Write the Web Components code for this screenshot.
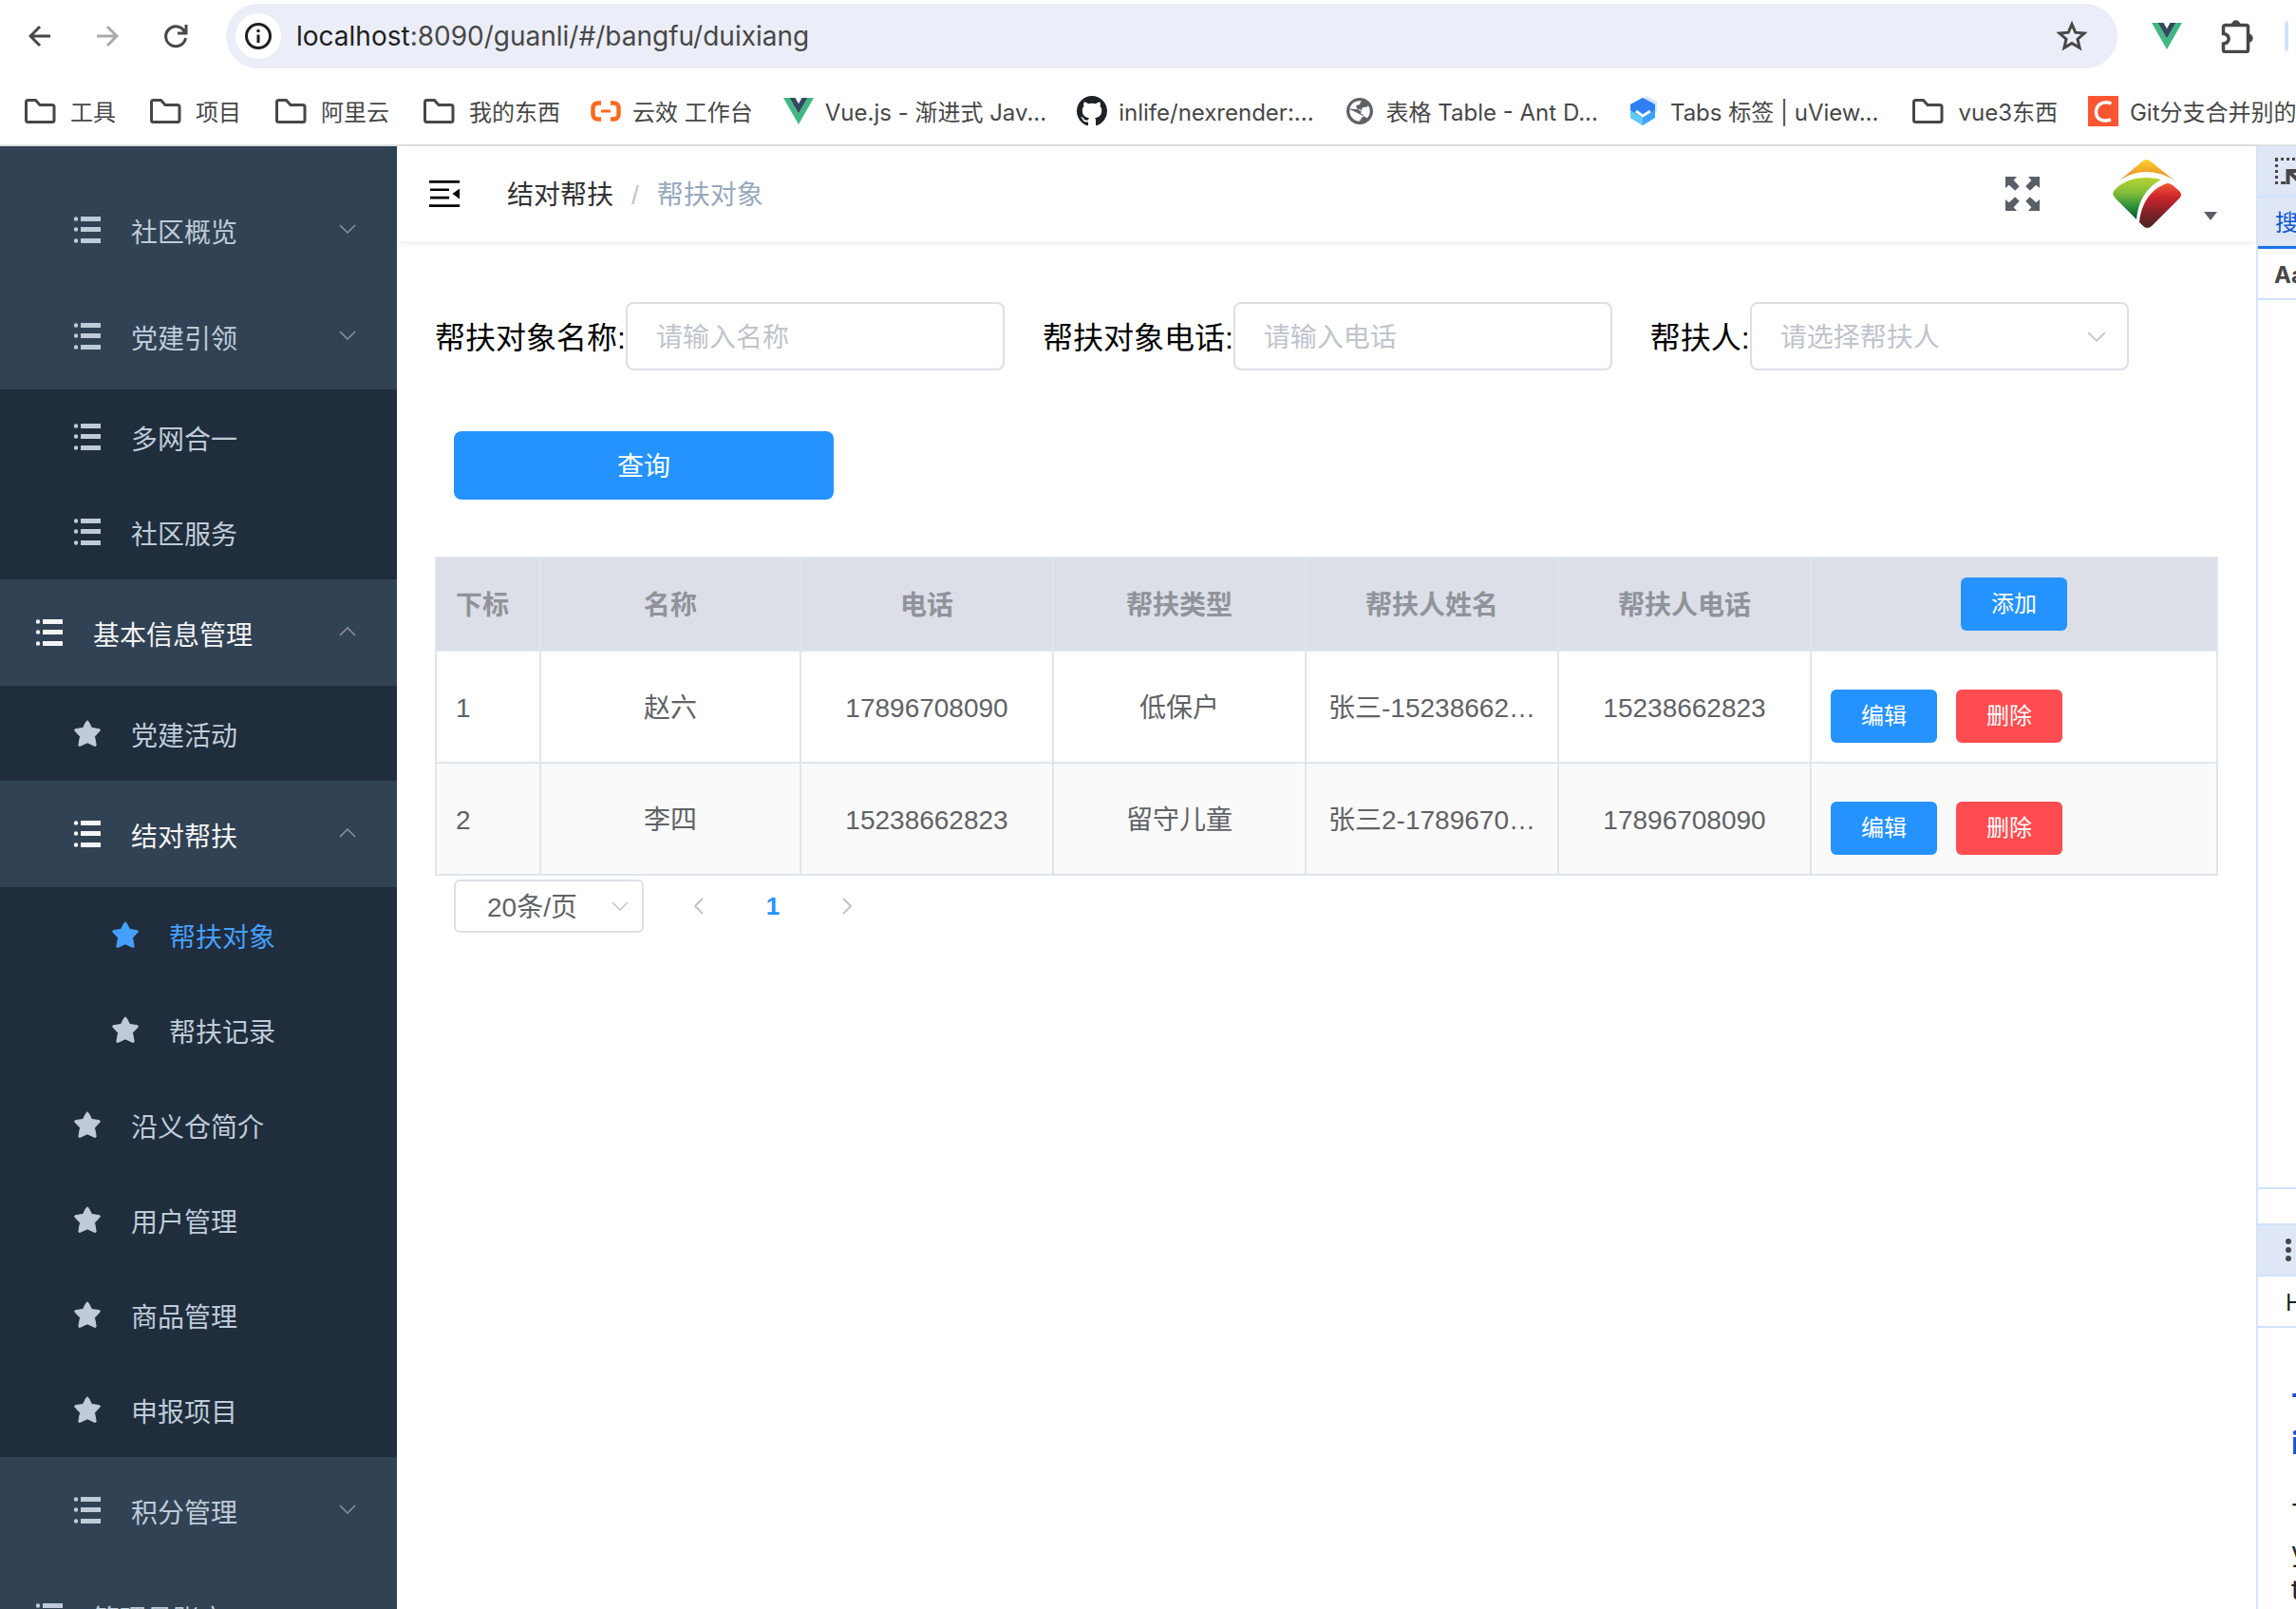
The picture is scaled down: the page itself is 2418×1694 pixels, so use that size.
<!DOCTYPE html>
<html lang="zh-CN">
<head>
<meta charset="utf-8">
<title>帮扶对象</title>
<style>
  html, body { height: 100%; margin: 0; }
  body {
    overflow: hidden;
    background: #fff;
    color: #303133;
    font: 28px/32px "Liberation Sans", "Noto Sans CJK SC", sans-serif;
    --line: #dfe6ec;
    --blue: #2593ff;
    --red: #ff4c50;
    --dev-line: #d3e3fd;
    --menu: #314254;
    --menu-dark: #202d3c;
    --drop: 3px;
  }
</style>
</head>
<body>
<admin-window></admin-window>

<script>
const ICONS = {
  back: ['0 0 24 24', '<path d="M23 12H2M12 2 2 12l10 10" fill="none" stroke="currentColor" stroke-width="3"/>'],
  forward: ['0 0 24 24', '<path d="M1 12h21M12 2l10 10-10 10" fill="none" stroke="currentColor" stroke-width="3"/>'],
  reload: ['0 0 26 26', '<path d="M22.500 8.500A10.500 10.500 0 1 0 23.500 15M24 1v9h-9" fill="none" stroke="currentColor" stroke-width="3"/>'],
  info: ['0 0 28 28', '<circle cx="14" cy="14" r="12.500" fill="none" stroke="currentColor" stroke-width="3"/><path d="M14 12.500V21" stroke="currentColor" stroke-width="3"/><circle cx="14" cy="8.500" r="1.800" fill="currentColor"/>'],
  bookmark: ['0 0 32 32', '<path d="m16 3.500 3.700 8.700 9.400.8-7.100 6.200 2.100 9.200L16 23.500l-8.100 4.900L10 19.200 2.900 13l9.400-.8z" fill="none" stroke="currentColor" stroke-width="3"/>'],
  vue: ['0 0 32 28', '<path d="M0 0h6.500L16 16.500 25.500 0H32L16 28z" fill="#41b883"/><path d="M6.500 0h6L16 6.200 19.500 0h6L16 16.500z" fill="#35495e"/>'],
  puzzle: ['0 0 36 36', '<path d="M3.500 8.500a2 2 0 0 1 2-2h22a2 2 0 0 1 2 2v24a2 2 0 0 1-2 2h-22a2 2 0 0 1-2-2v-6.500c7.500-1 7.500-9.500 0-10.500z" fill="none" stroke="currentColor" stroke-width="3.500"/><path d="M12 6a4.700 4.700 0 0 1 9.400 0zM30 15.500a4.700 4.700 0 0 1 0 9.400z" fill="currentColor"/>'],
  folder: ['0 0 40 32', '<path d="M5.500 6.500a2 2 0 0 1 2-2h8l4.500 5h13a2 2 0 0 1 2 2v14a2 2 0 0 1-2 2H7.500a2 2 0 0 1-2-2z" fill="none" stroke="currentColor" stroke-width="3"/>'],
  yunxiao: ['0 0 32 32', '<path d="M11 7.500H7.500a5 5 0 0 0-5 5v7a5 5 0 0 0 5 5H11M21 7.500h3.500a5 5 0 0 1 5 5v7a5 5 0 0 1-5 5H21" fill="none" stroke="#ff6a1f" stroke-width="4.500"/><path d="M11 16h10" stroke="#ff6a1f" stroke-width="3"/>'],
  github: ['0 0 16 16', '<path fill="#1f2328" d="M8 0C3.580 0 0 3.580 0 8c0 3.540 2.290 6.530 5.470 7.590.4.070.55-.17.55-.38 0-.19-.01-.82-.01-1.490-2.010.37-2.530-.49-2.690-.94-.09-.23-.48-.94-.82-1.130-.28-.15-.68-.52-.01-.53.63-.01 1.080.58 1.230.82.72 1.210 1.870.87 2.330.66.07-.52.28-.87.51-1.070-1.780-.2-3.640-.89-3.640-3.950 0-.87.31-1.590.82-2.150-.08-.2-.36-1.020.08-2.120 0 0 .67-.21 2.200.82.64-.18 1.320-.27 2-.27s1.360.09 2 .27c1.530-1.040 2.200-.82 2.200-.82.44 1.100.16 1.920.08 2.120.51.56.82 1.270.82 2.150 0 3.070-1.870 3.750-3.650 3.950.29.25.54.73.54 1.480 0 1.070-.01 1.930-.01 2.200 0 .21.15.46.55.38A8.010 8.010 0 0 0 16 8c0-4.420-3.580-8-8-8"/>'],
  globe: ['0 0 24 24', '<path fill="#5f6368" d="M12 1.500C6.200 1.500 1.500 6.200 1.500 12S6.200 22.500 12 22.500 22.500 17.800 22.500 12 17.800 1.500 12 1.500zm-1 18.430c-3.950-.49-7-3.850-7-7.930 0-.62.08-1.210.21-1.790L9 10.500h3c.55 0 1 .45 1 1v3h1c1 0 1 2 0 2.500-1.500.5-1 2.930-3 2.930zm7-2.500c1.200-1.400 2-3.400 2-5.430 0-1.500-.5-3-1.300-4.300-1.200 1.800-3.700.8-4.700 1.800-1 1 .5 2.500-1.500 2.500L9.500 9.500c-1-1.500.5-2.500 2-2.500 1 0 .5-2 2-2.800C8.500 3 4.500 6.500 4.100 10.500" fill-rule="evenodd"/>'],
  uview: ['0 0 32 32', '<path d="m19 0 11 6v11l-8 4L8 6z" fill="#dbe7fb"/><path d="M15 2 28 9v14l-13 8-13-8V9z" fill="#3ba3fd"/><path d="M15 2 28 9v6l-13 8L2 15V9z" fill="#2f7ff6"/><path d="m2 15 13 8v8L2 23z" fill="#63c8ff"/><path d="m8 16 7 5 8-5" fill="none" stroke="#fff" stroke-width="2.800"/>'],
  csdn: ['0 0 32 32', '<path d="M0 0h32v32H0z" fill="#fc5531"/><path d="M24.500 8C16 4.500 8.500 9 8.500 17c0 8 7 10.500 15.500 8" fill="none" stroke="#fff" stroke-width="3.500"/>'],
  list: ['0 0 28 28', '<path d="M7 0h21v5H7zM7 11h21v5H7zM7 23h21v5H7z" fill="currentColor"/><circle cx="2" cy="2.500" r="2.200" fill="currentColor"/><circle cx="2" cy="13.500" r="2.200" fill="currentColor"/><circle cx="2" cy="25.500" r="2.200" fill="currentColor"/>'],
  star: ['0 0 28 28', '<path d="M14 1c.8 0 1.200.8 1.600 1.600l3 5.900 7.400 1c1.600.3 1.700 1.200.8 2.200l-5.300 5.600 1.600 8.600c.2 1.500-.6 1.800-1.800 1.300L14 23.800l-7.300 3.400c-1.200.5-2 .2-1.800-1.300l1.600-8.600L1.200 11.700C.3 10.700.4 9.800 2 9.500l7.400-1 3-5.900C12.800 1.800 13.200 1 14 1z" fill="currentColor" stroke="currentColor" stroke-width="1"/>'],
  down: ['0 0 18 10', '<path d="m1 1 8 8 8-8" fill="none" stroke="currentColor" stroke-width="1.500"/>'],
  up: ['0 0 18 10', '<path d="m1 9 8-8 8 8" fill="none" stroke="currentColor" stroke-width="1.500"/>'],
  prev: ['0 0 10 18', '<path d="M9 1 1 9l8 8" fill="none" stroke="currentColor" stroke-width="2"/>'],
  next: ['0 0 10 18', '<path d="m1 1 8 8-8 8" fill="none" stroke="currentColor" stroke-width="2"/>'],
  fold: ['0 0 32 28', '<path d="M0 0h32v2.700H0zM1 8.500h20v2.600H1zM1 16.800h20v2.600H1zM0 25.300h32V28H0zM32 8.500v11L24.500 14z" fill="currentColor"/>'],
  full: ['0 0 36 36', '<path fill="currentColor" d="M0 0h12L8.700 3.700l6 6.500-4.500 4.500-6.500-6L0 12zM36 0v12l-3.700-3.300-6.500 6-4.500-4.500 6-6.500L24 0zM36 36H24l3.300-3.700-6-6.500 4.500-4.500 6.500 6L36 24zM0 36V24l3.700 3.300 6.500-6 4.500 4.500-6 6.500L12 36z"/>'],
  brand: ['0 0 72 72', '<defs><linearGradient id="y" x2="0" y2="1"><stop stop-color="#fdd02c"/><stop offset="1" stop-color="#e3802b"/></linearGradient><linearGradient id="g" x2="0" y2="1"><stop stop-color="#b6d335"/><stop offset=".35" stop-color="#86bf37"/><stop offset=".7" stop-color="#2c8f3b"/><stop offset="1" stop-color="#04532f"/></linearGradient><linearGradient id="r" x2="0" y2="1"><stop stop-color="#f05a33"/><stop offset=".3" stop-color="#cf252c"/><stop offset=".7" stop-color="#7a2227"/><stop offset="1" stop-color="#4a2426"/></linearGradient></defs><path d="M6 23 31 2q5-4 9 0l25 20C48 11 25 9 6 23z" fill="url(#y)"/><path d="M2 32C12 20 33 16 51 21 35 30 27 43 25 63L3 41q-5-5-1-9z" fill="url(#g)"/><path d="M57 25q4 0 6 2l7 6q4 4 0 8L41 70q-5 4-9 0l-4-4C30 48 38 32 57 25z" fill="url(#r)"/>'],
  caret: ['0 0 14 9', '<path d="M0 0h14L7 9z" fill="currentColor"/>'],
  inspect: ['0 0 28 28', '<path d="M1.500 28V0M0 1.500h28" fill="none" stroke="currentColor" stroke-width="3" stroke-dasharray="3 3"/><path d="M6 25h5v3H6z" fill="currentColor"/><path d="M13.500 28V14H28M14 14l14 14" fill="none" stroke="currentColor" stroke-width="4"/>'],
  more: ['0 0 6 24', '<circle cx="3" cy="3" r="3" fill="currentColor"/><circle cx="3" cy="12" r="3" fill="currentColor"/><circle cx="3" cy="21" r="3" fill="currentColor"/>']
};

const BASE = '*{box-sizing:border-box}a{color:inherit;text-decoration:none}button,input,select{font:inherit;color:inherit;margin:0}button{border:0;background:none;padding:0}';

/* Registers an element that renders its styles and markup into a shadow root
   when it is connected; the markup can be built from its attributes. */
function define(name, css, html) {
  customElements.define(name, class extends HTMLElement {
    connectedCallback() {
      if (this.shadowRoot) return;
      const markup = typeof html === 'function' ? html(n => this.getAttribute(n) || '') : html;
      this.attachShadow({ mode: 'open' }).innerHTML = `<style>${BASE}${css}</style>${markup}`;
    }
  });
}
const icon = (name, w, h = w) => `<ui-icon name="${name}" w="${w}" h="${h}"></ui-icon>`;

define('ui-icon', ':host{display:block;flex:none}svg{display:block}', a => {
  const [box, shapes] = ICONS[a('name')];
  return `<svg width="${a('w')}" height="${a('h')}" viewBox="${box}" aria-hidden="true">${shapes}</svg>`;
});

define('browser-toolbar', `
  :host{display:flex;align-items:center;height:76px;padding-left:30px;color:#474747}
  .nav{display:flex;gap:47px;align-items:center;width:208px}
  .nav button[disabled]{color:#a9a9a9}
  .omnibox{flex:1;display:flex;align-items:center;height:68px;border-radius:34px;background:#ebeef8;padding:0 32px 0 10px}
  .site{display:flex;align-items:center;justify-content:center;width:48px;height:48px;border-radius:50%;background:#fff;color:#1f1f1f}
  .url{flex:1;padding:0 16px;font:28px/36px Inter,"Liberation Sans",sans-serif;color:#474747}
  .url b{font-weight:400;color:#1f1f1f}
  .ext{display:flex;align-items:center;gap:32px;padding:0 8px 0 36px}
  .vue{width:40px}
  .sep{width:4px;height:32px;border-radius:2px;background:#d3e3fd}
`, `
  <div class="nav">
    <button aria-label="Back">${icon('back', 24)}</button>
    <button aria-label="Forward" disabled>${icon('forward', 24)}</button>
    <button aria-label="Reload">${icon('reload', 26)}</button>
  </div>
  <div class="omnibox">
    <button class="site" aria-label="Site information">${icon('info', 28)}</button>
    <div class="url" role="textbox" aria-label="Address"><b>localhost</b>:8090/guanli/#/bangfu/duixiang</div>
    <button aria-label="Bookmark">${icon('bookmark', 32)}</button>
  </div>
  <div class="ext">
    <button class="vue" aria-label="Vue devtools">${icon('vue', 32, 28)}</button>
    <button aria-label="Extensions">${icon('puzzle', 36)}</button>
    <span class="sep"></span>
  </div>
`);

define('bookmark-item', `
  :host{display:block;flex:none}
  a{display:flex;align-items:center;gap:12px;font:24px/32px Inter,"Noto Sans CJK SC",sans-serif;color:#474747;white-space:nowrap}
  span{padding-top:var(--drop)}
`, a => `<a href="#">${icon(a('icon'), a('icon') === 'folder' ? 40 : 32, a('icon') === 'vue' ? 28 : 32)}<span><slot></slot></span></a>`);

define('bookmarks-bar', `
  :host{display:flex;align-items:center;gap:32px;height:78px;padding:6px 0 0 22px;border-bottom:2px solid #dfe0e1;overflow:hidden}
`, `
  <bookmark-item icon="folder">工具</bookmark-item>
  <bookmark-item icon="folder">项目</bookmark-item>
  <bookmark-item icon="folder">阿里云</bookmark-item>
  <bookmark-item icon="folder">我的东西</bookmark-item>
  <bookmark-item icon="yunxiao">云效 工作台</bookmark-item>
  <bookmark-item icon="vue">Vue.js - 渐进式 Jav...</bookmark-item>
  <bookmark-item icon="github">inlife/nexrender:...</bookmark-item>
  <bookmark-item icon="globe">表格 Table - Ant D...</bookmark-item>
  <bookmark-item icon="uview">Tabs 标签 | uView...</bookmark-item>
  <bookmark-item icon="folder">vue3东西</bookmark-item>
  <bookmark-item icon="csdn">Git分支合并别的分</bookmark-item>
`);

/* level = depth of the entry, arrow = "down" | "up" for entries that fold. */
define('menu-entry', `
  :host{display:block;flex:none;color:#bfcbd9;background:var(--menu-dark)}
  :host([arrow]){background:var(--menu)}
  :host([open]){color:#f4f4f5}
  :host([active]){color:#459ffe}
  a{display:flex;align-items:center;gap:32px;height:100px;padding:0 43px 0 38px}
  :host([arrow]) a{height:112px}
  :host([level="2"]) a{padding-left:78px}
  :host([level="3"]) a{padding-left:118px}
  span{flex:1;padding-top:8px}
  .arrow{padding-bottom:3px;color:#909399}
`, a => `<a href="#">${icon(a('icon') || 'list', 28)}<span><slot></slot></span>${a('arrow') ? `<i class="arrow">${icon(a('arrow'), 18, 10)}</i>` : ''}</a>`);

define('side-menu', `
  :host{display:flex;flex:none;flex-direction:column;width:418px;padding-top:32px;background:var(--menu);overflow:hidden}
  nav{display:contents}
`, `
  <nav>
  <menu-entry level="2" arrow="down">社区概览</menu-entry>
  <menu-entry level="2" arrow="down">党建引领</menu-entry>
  <menu-entry level="2">多网合一</menu-entry>
  <menu-entry level="2">社区服务</menu-entry>
  <menu-entry level="1" arrow="up" open>基本信息管理</menu-entry>
  <menu-entry level="2" icon="star">党建活动</menu-entry>
  <menu-entry level="2" arrow="up" open>结对帮扶</menu-entry>
  <menu-entry level="3" icon="star" active>帮扶对象</menu-entry>
  <menu-entry level="3" icon="star">帮扶记录</menu-entry>
  <menu-entry level="2" icon="star">沿义仓简介</menu-entry>
  <menu-entry level="2" icon="star">用户管理</menu-entry>
  <menu-entry level="2" icon="star">商品管理</menu-entry>
  <menu-entry level="2" icon="star">申报项目</menu-entry>
  <menu-entry level="2" arrow="down">积分管理</menu-entry>
  <menu-entry level="1" arrow="down">管理员账户</menu-entry>
  </nav>
`);

define('nav-bar', `
  :host{display:flex;align-items:center;height:100px;padding:0 41px 0 34px;box-shadow:0 2px 8px rgba(0,21,41,.08)}
  .fold{color:#000}
  ol{display:flex;gap:19px;margin:0 0 0 50px;padding:var(--drop) 0 0;list-style:none}
  .sep{color:#c0c4cc}
  .here{color:#97a8be}
  .tools{display:flex;align-items:center;margin-left:auto;color:#5a5e66}
  .user{display:flex;align-items:flex-end;gap:24px;margin-left:77px}
  .user ui-icon:last-child{padding-bottom:8px}
`, `
  <button class="fold" aria-label="折叠菜单">${icon('fold', 32, 28)}</button>
  <ol><li>结对帮扶</li><li class="sep">/</li><li class="here">帮扶对象</li></ol>
  <div class="tools">
    <button aria-label="全屏">${icon('full', 36)}</button>
    <button class="user" aria-label="用户菜单">${icon('brand', 72)}${icon('caret', 14, 9)}</button>
  </div>
`);

define('text-field', `
  :host{display:flex;align-items:center}
  label{padding-top:var(--drop);font-size:32px;line-height:36px;color:#000;white-space:nowrap}
  input{width:399px;height:72px;padding:var(--drop) 30px 0;border:2px solid #dcdfe6;border-radius:8px;background:#fff;outline:0}
  input::placeholder{color:#c0c4cc;opacity:1}
`, a => `<label for="f">${a('label')}</label><input id="f" placeholder="${a('placeholder')}">`);

define('select-field', `
  :host{display:flex;align-items:center;color:#606266}
  label{padding-top:var(--drop);font-size:32px;line-height:36px;color:#000;white-space:nowrap}
  .box{display:grid;align-items:center;width:399px}
  select{grid-area:1/1;width:100%;height:72px;padding:var(--drop) 30px 0;border:2px solid #dcdfe6;border-radius:8px;background:#fff;appearance:none;outline:0}
  .empty select{color:#c0c4cc}
  .box ui-icon{grid-area:1/1;justify-self:end;margin-right:24px;color:#c0c4cc;pointer-events:none}
  :host([small]) .box{width:200px}
  :host([small]) select{height:56px;border-radius:6px;padding-left:33px}
  :host([small]) .box ui-icon{margin-right:16px}
`, a => `${a('label') ? `<label for="s">${a('label')}</label>` : ''}
  <div class="box ${a('label') ? 'empty' : ''}"><select id="s" ${a('label') ? '' : 'aria-label="每页条数"'}><option>${a('value')}</option></select>${a('label') ? icon('down', 20, 11) : icon('down', 18, 10)}</div>`);

define('ui-button', `
  :host{display:inline-block;vertical-align:top}
  button{display:block;height:56px;padding:0 32px;border-radius:6px;background:var(--blue);color:#fff;font-size:24px;font-weight:400;line-height:32px}
  :host([danger]) button{background:var(--red)}
  :host([wide]) button{width:400px;height:72px;padding-top:var(--drop);border-radius:8px;font-size:28px}
`, `<button type="button"><slot></slot></button>`);

const rows = [
  ['1', '赵六', '17896708090', '低保户', '张三-15238662…', '15238662823'],
  ['2', '李四', '15238662823', '留守儿童', '张三2-1789670…', '17896708090']
];
define('people-table', `
  :host{display:block}
  table{width:100%;table-layout:fixed;border-collapse:separate;border-spacing:0;border:solid var(--line);border-width:2px 0 0 2px;color:#606266;text-align:center}
  th,td{padding:var(--drop) 20px 0;border:solid var(--line);border-width:0 2px 2px 0;white-space:nowrap}
  th{height:98px;background:#dcdfe8;color:#909399;font-weight:700}
  td{height:118px}
  th:last-child,td:last-child{padding-top:0}
  th:first-child,td:first-child,td:last-child{text-align:left}
  tr:nth-child(2) td{background:#fafafa}
  .actions{display:flex;gap:20px;padding-top:20px}
`, `
  <table>
    <colgroup><col style="width:110px"><col style="width:274px"><col style="width:266px"><col style="width:266px"><col style="width:266px"><col style="width:266px"><col></colgroup>
    <thead><tr><th>下标</th><th>名称</th><th>电话</th><th>帮扶类型</th><th>帮扶人姓名</th><th>帮扶人电话</th><th><ui-button>添加</ui-button></th></tr></thead>
    <tbody>${rows.map(r => `<tr>${r.map(c => `<td>${c}</td>`).join('')}<td><div class="actions"><ui-button>编辑</ui-button><ui-button danger>删除</ui-button></div></td></tr>`).join('')}</tbody>
  </table>
`);

define('table-pager', `
  :host{display:flex;align-items:center;padding:4px 20px 0;color:#c0c4cc}
  .pages{display:flex;margin-left:19px}
  .pages button{display:flex;align-items:center;justify-content:center;width:78px;height:56px}
  .pages .on{color:var(--blue);font-weight:700;font-size:26px}
`, `
  <select-field small value="20条/页"></select-field>
  <div class="pages">
    <button aria-label="上一页">${icon('prev', 10, 18)}</button>
    <button class="on">1</button>
    <button aria-label="下一页">${icon('next', 10, 18)}</button>
  </div>
`);

define('page-body', `
  :host{display:block;padding:64px 40px}
  form{display:flex;flex-wrap:wrap;gap:64px 40px;margin-bottom:60px}
  .submit{width:100%;padding-left:20px}
`, `
  <form>
    <text-field label="帮扶对象名称:" placeholder="请输入名称"></text-field>
    <text-field label="帮扶对象电话:" placeholder="请输入电话"></text-field>
    <select-field label="帮扶人:" value="请选择帮扶人"></select-field>
    <div class="submit"><ui-button wide>查询</ui-button></div>
  </form>
  <people-table></people-table>
  <table-pager></table-pager>
`);

define('devtools-panel', `
  :host{display:flex;flex:none;flex-direction:column;width:42px;border-left:2px solid var(--dev-line);overflow:hidden;white-space:nowrap;font:24px/32px Inter,"Noto Sans CJK SC",sans-serif;color:#1f1f1f}
  .bar{display:flex;flex:none;align-items:center;border-bottom:2px solid var(--dev-line)}
  .tint{background:#dfe6f5;color:#474747}
  .tools{height:54px;padding-left:18px}
  .tab,.case,.heading{height:54px;padding:var(--drop) 0 0 18px}
  .tab{border-bottom:3px solid #1a73e8;color:#0b57d0}
  .case{padding-left:17px;font-weight:700;color:#474747}
  .results{flex:none;height:936px;border-bottom:2px solid var(--dev-line)}
  .status{height:38px}
  .drawer{height:54px;padding-left:29px}
  .heading{padding-left:29px}
  .news{flex:1;padding:62px 0 0 35px;font-size:28px;line-height:40px}
  .news a{display:block;padding-bottom:34px;color:#0b57d0;font-size:32px;font-weight:700}
`, `
  <div class="bar tint tools">${icon('inspect', 28)}</div>
  <div class="bar tint tab">搜</div>
  <div class="bar case">Aa</div>
  <div class="results"></div>
  <div class="bar status"></div>
  <div class="bar tint drawer">${icon('more', 6, 24)}</div>
  <div class="bar heading">H</div>
  <div class="news"><a href="#">T<br>i</a>T<br>y<br>t</div>
`);

define('admin-window', `
  :host{display:flex;flex-direction:column;height:100vh}
  .view{flex:1;display:flex;min-height:0}
  main{flex:1;min-width:0}
`, `
  <browser-toolbar></browser-toolbar>
  <bookmarks-bar></bookmarks-bar>
  <div class="view">
    <side-menu></side-menu>
    <main><nav-bar></nav-bar><page-body></page-body></main>
    <devtools-panel></devtools-panel>
  </div>
`);
</script>
</body>
</html>
